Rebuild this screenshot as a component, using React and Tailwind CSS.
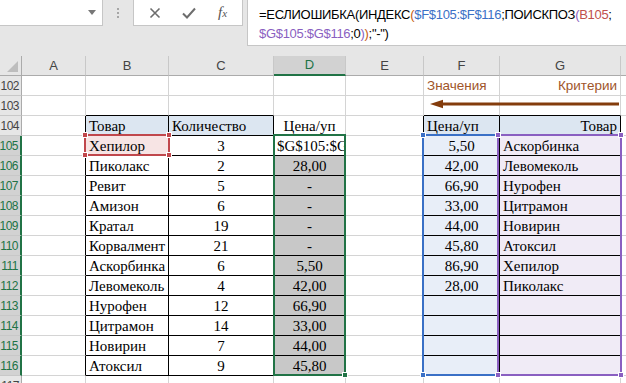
import React from 'react';

// sheet data: B / C / D columns and F / G lookup table
const goods = [
  ['Хепилор', '3', null],
  ['Пиколакс', '2', '28,00'],
  ['Ревит', '5', '-'],
  ['Амизон', '6', '-'],
  ['Кратал', '19', '-'],
  ['Корвалмент', '21', '-'],
  ['Аскорбинка', '6', '5,50'],
  ['Левомеколь', '4', '42,00'],
  ['Нурофен', '12', '66,90'],
  ['Цитрамон', '14', '33,00'],
  ['Новирин', '7', '44,00'],
  ['Атоксил', '9', '45,80'],
];

const lookup = [
  ['5,50', 'Аскорбинка'],
  ['42,00', 'Левомеколь'],
  ['66,90', 'Нурофен'],
  ['33,00', 'Цитрамон'],
  ['44,00', 'Новирин'],
  ['45,80', 'Атоксил'],
  ['86,90', 'Хепилор'],
  ['28,00', 'Пиколакс'],
  ['', ''],
  ['', ''],
  ['', ''],
  ['', ''],
];

const serif = "font-['Liberation_Serif',serif] text-[15px] text-black";

const Cell = ({ r = 'g', b = 'g', className = '', children }) => (
  <div
    className={`border-r border-b overflow-hidden whitespace-nowrap flex items-center px-[3px] pt-[1px] ${
      r === 'k' ? 'border-r-black' : 'border-r-[#d4d4d4]'
    } ${b === 'k' ? 'border-b-black' : 'border-b-[#d4d4d4]'} ${className}`}
  >
    {children}
  </div>
);

const RowHead = ({ n, active }) => (
  <div
    className={`flex items-center justify-end pr-[2px] border-b border-b-[#c8c8c8] text-[12px] tracking-[-0.5px] font-['Liberation_Sans',sans-serif] ${
      active
        ? 'bg-[#d2d2d2] text-[#217346] border-r-2 border-r-[#217346]'
        : 'bg-[#e6e6e6] text-[#444] border-r border-r-[#ababab]'
    }`}
  >
    {n}
  </div>
);

const ColHead = ({ label, active }) => (
  <div
    className={`flex items-center justify-center border-r border-r-[#c8c8c8] text-[13px] font-['Liberation_Sans',sans-serif] ${
      active
        ? 'bg-[#d2d2d2] text-[#217346] border-b-2 border-b-[#217346]'
        : 'bg-[#e6e6e6] text-[#444] border-b border-b-[#ababab]'
    }`}
  >
    {label}
  </div>
);

const Corners = ({ color }) => (
  <>
    <span className={`absolute -left-[4px] -top-[4px] w-[6px] h-[6px] border border-white ${color}`} />
    <span className={`absolute -right-[4px] -top-[4px] w-[6px] h-[6px] border border-white ${color}`} />
    <span className={`absolute -left-[4px] -bottom-[4px] w-[6px] h-[6px] border border-white ${color}`} />
    <span className={`absolute -right-[4px] -bottom-[4px] w-[6px] h-[6px] border border-white ${color}`} />
  </>
);

function FormulaBar() {
  return (
    <div className="h-[56px] bg-[#e6e6e6] flex items-start font-['Liberation_Sans',sans-serif]">
      <div className="w-[103px] h-[26px] bg-white border-r border-b border-[#c6c6c6] flex items-center justify-end pr-[6px]">
        <svg width="8" height="5" viewBox="0 0 8 5">
          <path d="M0 0h8L4 5z" fill="#777" />
        </svg>
      </div>
      <div className="w-[30px] h-[26px] flex flex-col items-center justify-center gap-[2px]">
        <span className="w-[2px] h-[2px] bg-[#a6a6a6]" />
        <span className="w-[2px] h-[2px] bg-[#a6a6a6]" />
        <span className="w-[2px] h-[2px] bg-[#a6a6a6]" />
      </div>
      <div className="w-[110px] h-[26px] bg-white border-x border-b border-[#c6c6c6] flex items-center justify-around px-[4px]">
        <svg width="12" height="12" viewBox="0 0 12 12">
          <path d="M1.5 1.5l9 9M10.5 1.5l-9 9" stroke="#6d6d6d" strokeWidth="1.6" />
        </svg>
        <svg width="14" height="12" viewBox="0 0 14 12">
          <path d="M1 6.5l4 4L13 1.5" stroke="#6d6d6d" strokeWidth="2" fill="none" />
        </svg>
        <span className="font-['Liberation_Serif',serif] italic text-[15px] text-[#555] leading-none">
          f<span className="text-[11px]">x</span>
        </span>
      </div>
      <div className="ml-[4px] flex-1 h-[46px] bg-white border-l border-b border-[#c6c6c6] pl-[11px] pt-[5px] text-[13px] leading-[19px] text-black whitespace-nowrap overflow-hidden tracking-[-0.3px]">
        <div>
          =ЕСЛИОШИБКА(ИНДЕКС<span className="text-[#c55a11]">(</span>
          <span className="text-[#3a70c6]">$F$105:$F$116</span>;ПОИСКПОЗ
          <span className="text-[#8a5fc1]">(</span>
          <span className="text-[#c0504d]">B105</span>;
        </div>
        <div>
          <span className="text-[#8a5fc1]">$G$105:$G$116</span>;0<span className="text-[#8a5fc1]">)</span>
          <span className="text-[#c55a11]">)</span>;"-")
        </div>
      </div>
    </div>
  );
}

export default function App() {
  return (
    <div className="w-[626px] h-[383px] overflow-hidden bg-white">
      <FormulaBar />
      <div className="relative grid w-[685px] grid-cols-[22px_64px_83px_105px_72px_78px_76px_121px_64px] auto-rows-[20px]">
        {/* column headers */}
        <div className="relative bg-[#e6e6e6] border-r border-b border-[#ababab]">
          <svg className="absolute right-[3px] bottom-[3px]" width="11" height="11" viewBox="0 0 11 11">
            <path d="M11 0v11H0z" fill="#bdbdbd" />
          </svg>
        </div>
        {['A', 'B', 'C', 'D', 'E', 'F', 'G', 'H'].map((c) => (
          <ColHead key={c} label={c} active={c === 'D'} />
        ))}

        {/* 102 */}
        <RowHead n={102} />
        <Cell /><Cell /><Cell /><Cell /><Cell />
        <Cell className="font-['Liberation_Sans',sans-serif] text-[13.5px] text-[#a0552a]">Значения</Cell>
        <Cell className="justify-end font-['Liberation_Sans',sans-serif] text-[13.5px] text-[#a0552a]">Критерии</Cell>
        <Cell />

        {/* 103 */}
        <RowHead n={103} />
        <Cell /><Cell b="k" /><Cell b="k" /><Cell /><Cell /><Cell b="k" /><Cell b="k" /><Cell />

        {/* 104 */}
        <RowHead n={104} />
        <Cell r="k" />
        <Cell r="k" b="k" className={`${serif} bg-[#dce6f1]`}>Товар</Cell>
        <Cell r="k" b="k" className={`${serif} bg-[#dce6f1]`}>Количество</Cell>
        <Cell b="k" className={`${serif} justify-center`}>Цена/уп</Cell>
        <Cell r="k" />
        <Cell r="k" b="k" className={`${serif} bg-[#dce6f1]`}>Цена/уп</Cell>
        <Cell r="k" b="k" className={`${serif} bg-[#dce6f1] justify-end`}>Товар</Cell>
        <Cell />

        {goods.map(([name, qty, price], i) => (
          <React.Fragment key={i}>
            <RowHead n={105 + i} active />
            <Cell r="k" />
            <Cell r="k" b="k" className={`${serif} ${i === 0 ? 'bg-[#f7e4e4]' : ''}`}>{name}</Cell>
            <Cell r="k" b="k" className={`${serif} justify-center`}>{qty}</Cell>
            {i === 0 ? (
              <Cell b="k" className={serif}>$G$105:$G$116</Cell>
            ) : (
              <Cell b="k" className={`${serif} justify-center bg-[#c8c8c8]`}>{price}</Cell>
            )}
            <Cell r="k" />
            <Cell r="k" b="k" className={`${serif} justify-center bg-[#e8eef8]`}>{lookup[i][0]}</Cell>
            <Cell r="k" b="k" className={`${serif} bg-[#f0ebf6]`}>{lookup[i][1]}</Cell>
            <Cell />
          </React.Fragment>
        ))}

        {/* 117 */}
        <RowHead n={117} />
        <Cell /><Cell /><Cell /><Cell /><Cell /><Cell /><Cell /><Cell />

        {/* arrow drawn over F103:G103 */}
        <svg className="absolute left-[430px] top-[43px]" width="190" height="10" viewBox="0 0 190 10">
          <path d="M12 5H189" stroke="#843c0c" strokeWidth="3" />
          <path d="M0 5L13 0.8V9.2z" fill="#843c0c" />
        </svg>

        {/* range highlights while editing the formula */}
        <div className="absolute left-[84px] top-[78px] w-[86px] h-[22px] border-2 border-[#c0474c]">
          <Corners color="bg-[#c0474c]" />
        </div>
        <div className="absolute left-[422px] top-[78px] w-[77px] h-[242px] border-2 border-[#3a70c6]">
          <Corners color="bg-[#3a70c6]" />
        </div>
        <div className="absolute left-[497px] top-[78px] w-[125px] h-[242px] border-2 border-[#8a5fc1]">
          <Corners color="bg-[#8a5fc1]" />
        </div>
        <div className="absolute left-[273px] top-[78px] w-[73px] h-[242px] border-2 border-[#217346]">
          <span className="absolute -right-[4px] -bottom-[4px] w-[6px] h-[6px] bg-[#217346] border border-white" />
        </div>
      </div>
    </div>
  );
}
